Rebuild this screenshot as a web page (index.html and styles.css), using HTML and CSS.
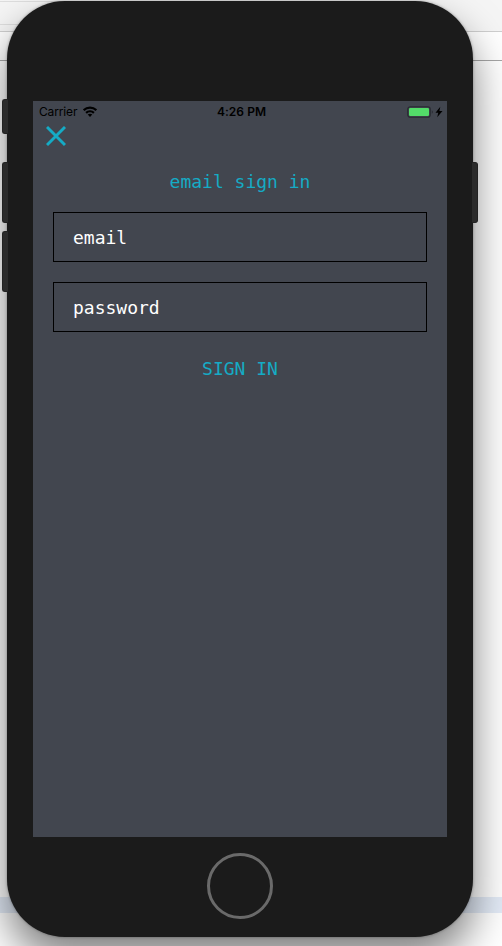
FILE: index.html
```html
<!DOCTYPE html>
<html lang="en">
<head>
<meta charset="utf-8">
<title>email sign in</title>
<link rel="stylesheet" href="styles.css">
</head>
<body>
<div class="desktop">
  <main class="phone">
    <span class="key key-mute"></span>
    <span class="key key-up"></span>
    <span class="key key-down"></span>
    <span class="key key-power"></span>
    <section class="screen">
      <header class="status">
        <div class="carrier">
          <span>Carrier</span>
          <svg class="wifi" width="14" height="11" viewBox="0 0 14 11" fill="none" stroke="#000" stroke-width="2.200">
            <path d="M.7 4.200C4.200.7 9.800.7 13.300 4.200"/>
            <path d="M3.100 6.900c2.200-2.200 5.600-2.200 7.800 0"/>
            <path d="M7 10.900 4.700 8.600c1.200-1.200 3.400-1.200 4.600 0z" fill="#000" stroke="none"/>
          </svg>
        </div>
        <time class="clock">4:26 PM</time>
        <div class="power">
          <svg width="36" height="12" viewBox="0 0 36 12">
            <rect x=".75" y=".75" width="22.500" height="10.500" rx="2.500" fill="none" stroke="#292b32" stroke-width="1.200"/>
            <rect x="2" y="2" width="20" height="8" rx="1.300" fill="#53db69"/>
            <path d="M24.800 4.200v3.600q1-.5 1-1.800t-1-1.800z" fill="#292b32"/>
            <path d="M33.300.8 28.500 6.700h2.800L30.200 11.200l5.300-6.200h-3.100z" fill="#000"/>
          </svg>
        </div>
      </header>
      <button class="close" type="button" aria-label="Close">
        <svg width="20" height="20" viewBox="0 0 20 20" stroke="#15abc5" stroke-width="2.900"><path d="M1 1 19 19M19 1 1 19"/></svg>
      </button>
      <form class="form">
        <h1 class="title">email sign in</h1>
        <input class="field" type="text" placeholder="email">
        <input class="field" type="password" placeholder="password">
        <button class="submit" type="button">SIGN IN</button>
      </form>
    </section>
    <div class="home"></div>
  </main>
</div>
</body>
</html>
```
FILE: styles.css
```css
* { box-sizing: border-box; }
body { margin: 0; overflow: hidden; }

.desktop {
  width: 502px;
  height: 946px;
  padding: 1px 29px 0 7px;
  overflow: hidden;
  background:
    linear-gradient(#dedede, #dedede) 0 1px / 100px 1px no-repeat,
    linear-gradient(#dedede, #dedede) 0 24px / 100px 1px no-repeat,
    linear-gradient(#cfcfcf, #cfcfcf) 0 31px / 100% 1px no-repeat,
    linear-gradient(#a6a6a6, #a6a6a6) 0 60px / 100% 1px no-repeat,
    linear-gradient(#f5f5f5, #f5f5f5) 0 0 / 100% 31px no-repeat,
    linear-gradient(#e3ebf7, #e3ebf7) 0 897px / 100% 16px no-repeat,
    #fff;
}

.phone {
  position: relative;
  display: flex;
  flex-direction: column;
  align-items: center;
  width: 466px;
  height: 936px;
  padding-top: 100px;
  border-radius: 58px;
  background: #1b1b1b;
  box-shadow: 0 22px 42px rgba(0, 0, 0, .5), 0 0 3px rgba(0, 0, 0, .35);
}

.key {
  position: absolute;
  left: -5px;
  width: 6px;
  height: 61px;
  border: 1px solid #222;
  border-right: 0;
  border-radius: 3px 0 0 3px;
  background: #2b2b2b;
}
.key-mute { top: 98px; height: 35px; }
.key-up { top: 161px; }
.key-down { top: 230px; }
.key-power {
  top: 161px;
  right: -5px;
  left: auto;
  border: 1px solid #222;
  border-left: 0;
  border-radius: 0 3px 3px 0;
}

.screen { width: 414px; height: 736px; background: #42464f; }

.status {
  display: grid;
  grid-template-columns: 1fr auto 1fr;
  align-items: center;
  height: 22px;
  padding: 0 4px 0 6px;
  font: 12px/22px Inter, Roboto, sans-serif;
  color: #000;
}
.carrier { display: flex; align-items: center; gap: 6px; letter-spacing: -.15px; }
.wifi { margin-top: -2px; }
.clock { padding-left: 1px; font-weight: 600; letter-spacing: .05px; }
.power { display: flex; justify-content: flex-end; margin-top: -1px; }

.close {
  display: block;
  margin: 3px 0 0 13px;
  padding: 0;
  border: 0;
  background: none;
}
.close svg { display: block; }

.form {
  display: flex;
  flex-direction: column;
  gap: 20px;
  padding: 25px 20px 0;
}
.title, .field, .submit {
  font: 18px/21px "DejaVu Sans Mono", monospace;
}
.title { margin: 0; text-align: center; color: #15abc5; }
.field {
  width: 100%;
  height: 50px;
  padding: 0 19px;
  border: 1px solid #000;
  border-radius: 0;
  outline: 0;
  background: transparent;
  color: #fff;
}
.field::placeholder { color: #fff; opacity: 1; }
.submit {
  align-self: center;
  margin-top: 6px;
  padding: 0;
  border: 0;
  background: none;
  color: #15abc5;
}

.home {
  width: 66px;
  height: 66px;
  margin-top: 16px;
  border: 3px solid #6a6a6a;
  border-radius: 50%;
}
```
